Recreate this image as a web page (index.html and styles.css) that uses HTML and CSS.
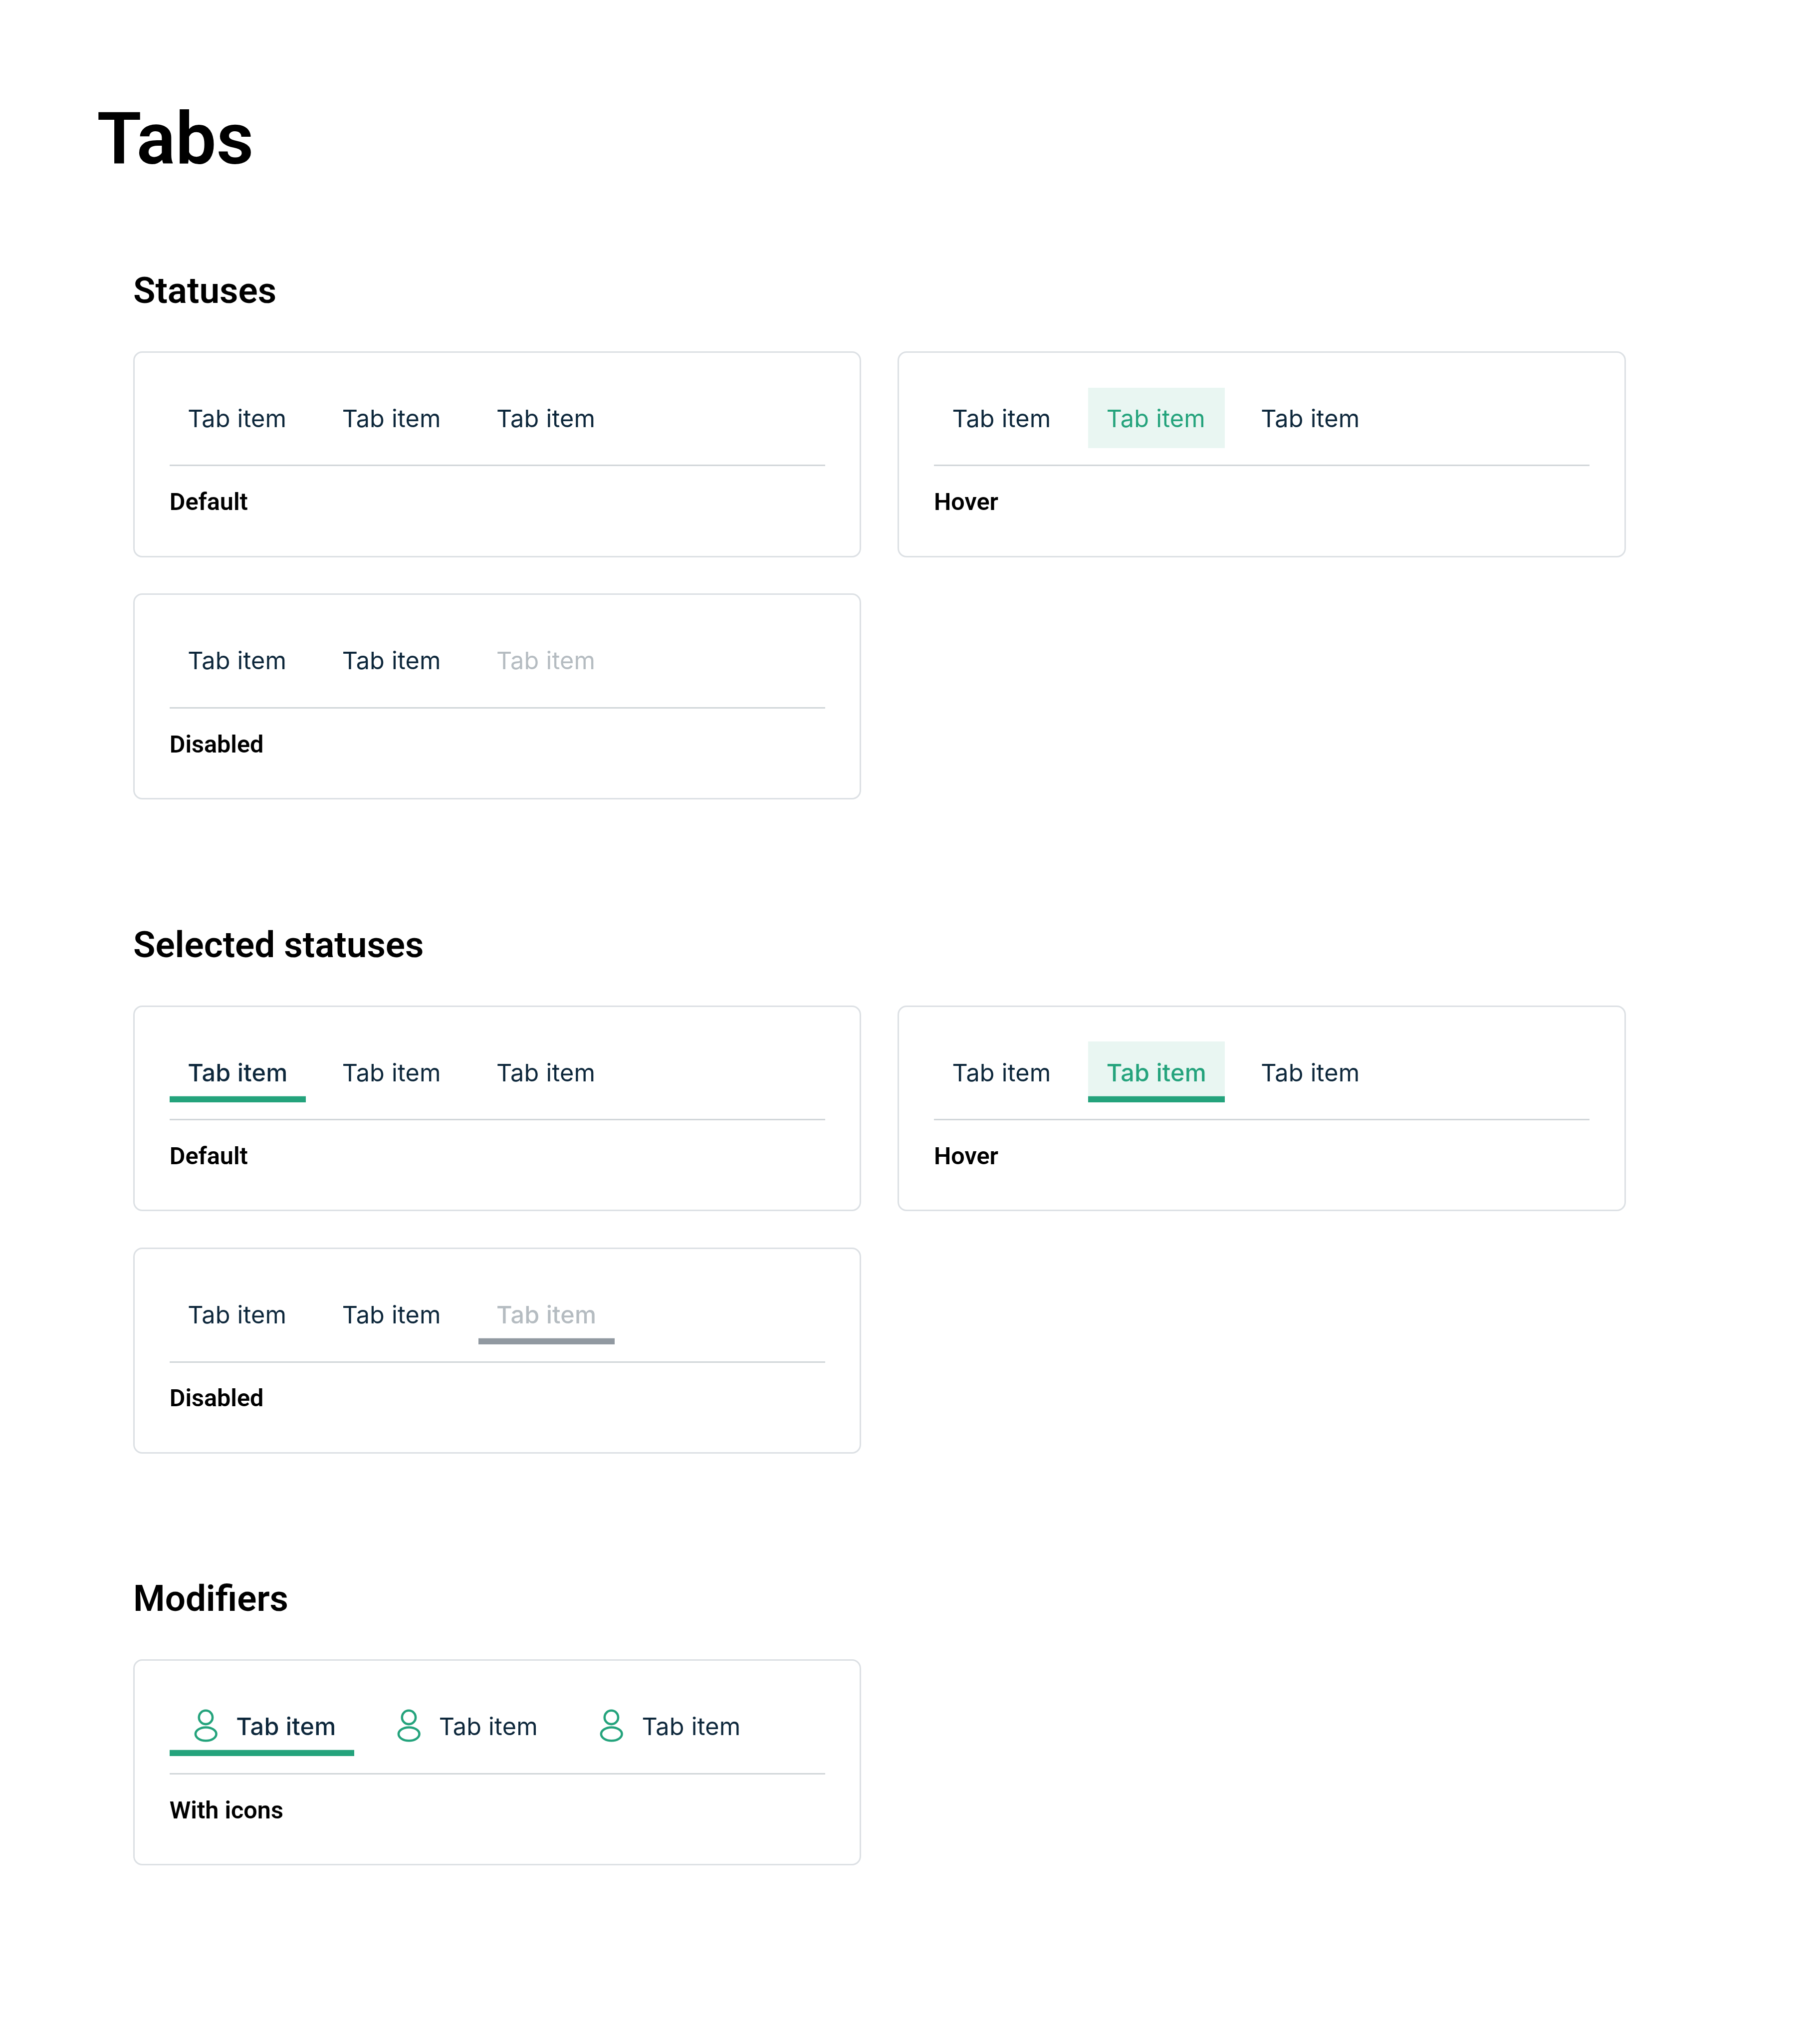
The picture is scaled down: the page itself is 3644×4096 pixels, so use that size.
FILE: index.html
```html
<!DOCTYPE html>
<html lang="en">
<head>
<meta charset="utf-8">
<title>Tabs</title>
<link rel="stylesheet" href="styles.css">
</head>
<body>
<svg class="sprite" aria-hidden="true">
  <symbol id="user" viewBox="0 0 24 24">
    <circle cx="12" cy="6.42" r="4.5"/>
    <ellipse cx="12.1" cy="17.42" rx="6.87" ry="4.42"/>
  </symbol>
</svg>
<main class="page">
  <h1 class="page-title">Tabs</h1>
  <div class="sections">
    <section class="section">
      <h2 class="section-title">Statuses</h2>
      <div class="cards">
        <article class="card">
          <div class="tabs"><span class="tab">Tab item</span><span class="tab">Tab item</span><span class="tab">Tab item</span></div>
          <h3 class="card-label">Default</h3>
        </article>
        <article class="card">
          <div class="tabs"><span class="tab">Tab item</span><span class="tab hover">Tab item</span><span class="tab">Tab item</span></div>
          <h3 class="card-label">Hover</h3>
        </article>
        <article class="card">
          <div class="tabs"><span class="tab">Tab item</span><span class="tab">Tab item</span><span class="tab disabled">Tab item</span></div>
          <h3 class="card-label">Disabled</h3>
        </article>
      </div>
    </section>
    <section class="section">
      <h2 class="section-title">Selected statuses</h2>
      <div class="cards">
        <article class="card">
          <div class="tabs"><span class="tab selected">Tab item</span><span class="tab">Tab item</span><span class="tab">Tab item</span></div>
          <h3 class="card-label">Default</h3>
        </article>
        <article class="card">
          <div class="tabs"><span class="tab">Tab item</span><span class="tab selected hover">Tab item</span><span class="tab">Tab item</span></div>
          <h3 class="card-label">Hover</h3>
        </article>
        <article class="card">
          <div class="tabs"><span class="tab">Tab item</span><span class="tab">Tab item</span><span class="tab selected disabled">Tab item</span></div>
          <h3 class="card-label">Disabled</h3>
        </article>
      </div>
    </section>
    <section class="section">
      <h2 class="section-title">Modifiers</h2>
      <div class="cards">
        <article class="card">
          <div class="tabs">
            <span class="tab with-icon selected"><svg class="icon"><use href="#user"/></svg>Tab item</span>
            <span class="tab with-icon"><svg class="icon"><use href="#user"/></svg>Tab item</span>
            <span class="tab with-icon"><svg class="icon"><use href="#user"/></svg>Tab item</span>
          </div>
          <h3 class="card-label">With icons</h3>
        </article>
      </div>
    </section>
  </div>
</main>
</body>
</html>
```
FILE: styles.css
```css
:root {
  /* one design unit */
  --u: calc(100vw / 1201);
  --green: #24a37c;
}
* { box-sizing: border-box; }
body { margin: 0; background: #fff; color: #000; }
.sprite { display: none; }
.page {
  height: 100vh;
  overflow: hidden;
  padding: calc(61 * var(--u)) calc(64 * var(--u)) 0;
  font-family: Roboto, sans-serif;
}
.page-title {
  margin: 0;
  font-size: calc(48 * var(--u));
  line-height: calc(62 * var(--u));
  font-weight: 600;
}
.sections {
  display: flex;
  flex-direction: column;
  gap: calc(80 * var(--u));
  padding: calc(53 * var(--u)) calc(24 * var(--u)) 0;
}
.section-title {
  margin: 0 0 calc(24 * var(--u));
  font-size: calc(24 * var(--u));
  line-height: calc(32 * var(--u));
  font-weight: 600;
}
.cards {
  display: grid;
  grid-template-columns: repeat(2, calc(481 * var(--u)));
  gap: calc(24 * var(--u));
}
.card {
  height: calc(136 * var(--u));
  padding: calc(23 * var(--u));
  border: calc(1 * var(--u)) solid #dce0e4;
  border-radius: calc(6 * var(--u));
}
.tabs {
  display: flex;
  gap: calc(12 * var(--u));
  height: calc(52 * var(--u));
  border-bottom: calc(1 * var(--u)) solid #d1d6d9;
}
.tab {
  display: flex;
  align-items: center;
  width: calc(90 * var(--u));
  height: calc(40 * var(--u));
  padding: calc(0.7 * var(--u)) calc(12 * var(--u)) 0;
  font-family: Inter, sans-serif;
  font-size: calc(16 * var(--u));
  letter-spacing: calc(0.075 * var(--u));
  white-space: nowrap;
  color: #0d273b;
}
.tab.with-icon { width: calc(122 * var(--u)); gap: calc(8 * var(--u)); }
.tab.hover { color: var(--green); background: #e9f6f2; }
.tab.selected { font-weight: 500; box-shadow: inset 0 calc(-4 * var(--u)) var(--green); }
.tab.disabled { color: #b5bcc1; }
.tab.selected.disabled { box-shadow: inset 0 calc(-4 * var(--u)) #9199a1; }
.icon {
  flex: none;
  width: calc(24 * var(--u));
  height: calc(24 * var(--u));
  margin-top: calc(-0.7 * var(--u));
  fill: none;
  stroke: var(--green);
  stroke-width: 1.5;
}
.card-label {
  margin: calc(11.75 * var(--u)) 0 0;
  font-size: calc(16 * var(--u));
  line-height: calc(24 * var(--u));
  font-weight: 600;
}
```
